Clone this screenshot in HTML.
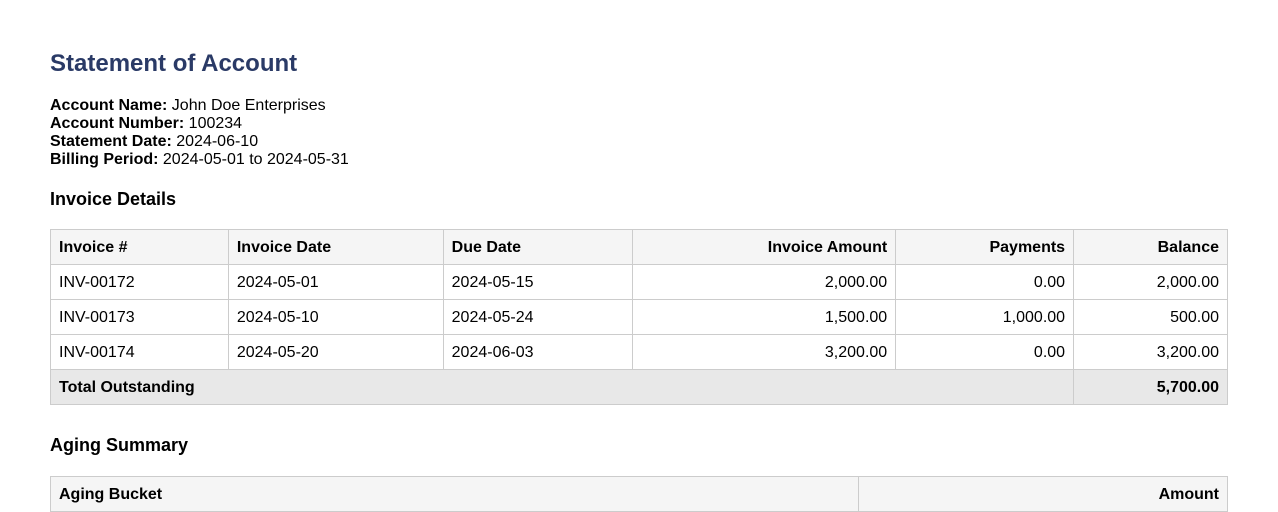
<!DOCTYPE html>
<html><head><style>
body{margin:0;background:#fff;font-family:"Liberation Sans",Arial,sans-serif;color:#000;}
.wrap{position:absolute;left:50px;top:0;width:1178px;}
h1{position:absolute;top:50px;left:0;margin:0;font-size:24px;color:#2a3a66;font-weight:bold;line-height:28px;}
.info{position:absolute;top:97px;left:0;font-size:16px;line-height:18px;}
h2{position:absolute;left:0;margin:0;font-size:18px;font-weight:bold;line-height:22px;}
table{position:absolute;left:0;width:1178px;border-collapse:collapse;font-size:16px;}
td,th{border:1px solid #ccc;height:33px;padding:1px 8px 0 8px;text-align:left;}
th{background:#f5f5f5;font-weight:bold;}
.r{text-align:right;}
tr.tot td{background:#e8e8e8;font-weight:bold;}
</style></head><body><div class="wrap">
<h1>Statement of Account</h1>
<div class="info"><b>Account Name:</b> John Doe Enterprises<br><b>Account Number:</b> 100234<br><b>Statement Date:</b> 2024-06-10<br><b>Billing Period:</b> 2024-05-01 to 2024-05-31</div>
<h2 style="top:188px">Invoice Details</h2>
<table style="top:229px">
<colgroup><col style="width:178px"><col style="width:215px"><col style="width:190px"><col style="width:263px"><col style="width:178px"><col style="width:154px"></colgroup>
<tr><th>Invoice #</th><th>Invoice Date</th><th>Due Date</th><th class="r">Invoice Amount</th><th class="r">Payments</th><th class="r">Balance</th></tr>
<tr><td>INV-00172</td><td>2024-05-01</td><td>2024-05-15</td><td class="r">2,000.00</td><td class="r">0.00</td><td class="r">2,000.00</td></tr>
<tr><td>INV-00173</td><td>2024-05-10</td><td>2024-05-24</td><td class="r">1,500.00</td><td class="r">1,000.00</td><td class="r">500.00</td></tr>
<tr><td>INV-00174</td><td>2024-05-20</td><td>2024-06-03</td><td class="r">3,200.00</td><td class="r">0.00</td><td class="r">3,200.00</td></tr>
<tr class="tot"><td colspan="5">Total Outstanding</td><td class="r">5,700.00</td></tr>
</table>
<h2 style="top:434px">Aging Summary</h2>
<table style="top:476px">
<colgroup><col style="width:809px"><col style="width:369px"></colgroup>
<tr><th>Aging Bucket</th><th class="r">Amount</th></tr>
</table>
</div></body></html>
